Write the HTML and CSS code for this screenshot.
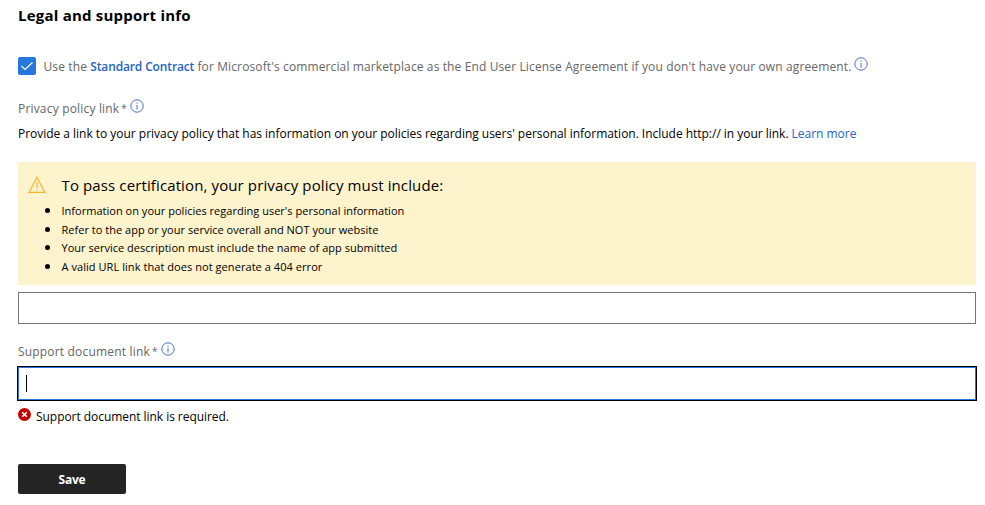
FILE: index.html
```html
<!DOCTYPE html>
<html lang="en">
<head>
<meta charset="utf-8">
<title>Legal and support info</title>
<link rel="stylesheet" href="styles.css">
</head>
<body>
<svg class="defs" width="0" height="0">
  <symbol id="info" viewBox="0 0 14 14"><circle cx="7" cy="7" r="6.2" fill="none" stroke="currentColor"/><path d="M7 6v4.5M7 3.5v1.2" stroke="currentColor" fill="none"/></symbol>
</svg>
<form class="page">
  <h1><span>Legal and support info</span></h1>
  <div class="agreement">
    <span class="checkbox" role="checkbox" aria-checked="true"><svg width="18" height="18" viewBox="0 0 18 18"><path d="M3.5 9l3.5 3.5 7.5-7" fill="none" stroke="#fff" stroke-width="1.2"/></svg></span>
    <span class="agreement-text">Use the <a class="strong">Standard Contract</a> for Microsoft's commercial marketplace as the End User License Agreement if you don't have your own agreement.</span>
    <svg class="info"><use href="#info"/></svg>
  </div>
  <div class="label privacy-label"><span class="label-text">Privacy policy link</span><span class="star">*</span><svg class="info"><use href="#info"/></svg></div>
  <p class="help"><span>Provide a link to your privacy policy that has information on your policies regarding users' personal information. Include http:// in your link. <a>Learn more</a></span></p>
  <section class="notice">
    <svg class="warning" width="18" height="18" viewBox="0 0 18 18"><path d="M9 1.2L16.9 16.4H1.1Z M9 6v6M9 13.2v1.4" fill="none" stroke="#f7b32b" stroke-width="1.1"/></svg>
    <div>
      <h2><span>To pass certification, your privacy policy must include:</span></h2>
      <ul>
        <li><span>Information on your policies regarding user's personal information</span></li>
        <li><span>Refer to the app or your service overall and NOT your website</span></li>
        <li><span>Your service description must include the name of app submitted</span></li>
        <li class="last"><span>A valid URL link that does not generate a 404 error</span></li>
      </ul>
    </div>
  </section>
  <div class="field"></div>
  <div class="label support-label"><span class="label-text">Support document link</span><span class="star">*</span><svg class="info"><use href="#info"/></svg></div>
  <div class="field focused"><span class="caret"></span></div>
  <div class="error"><svg width="13" height="13" viewBox="0 0 13 13"><circle cx="6.5" cy="6.5" r="6.5" fill="#c50000"/><path d="M4.2 4.2l4.6 4.6M8.8 4.2L4.2 8.8" stroke="#fff" stroke-width="1.6"/></svg><span>Support document link is required.</span></div>
  <button type="button"><span>Save</span></button>
</form>
</body>
</html>
```

FILE: styles.css
```css
* { box-sizing: border-box; }
body { margin: 0; background: #fff; color: #000; font: 12px/18px "Open Sans", "Noto Sans", sans-serif; }
.defs { display: block; height: 0; }
.page { width: 958px; margin-left: 18px; white-space: nowrap; }
h1, h2, p, ul { margin: 0; padding: 0; }
h1 { padding-top: 5px; height: 56px; font-size: 15px; line-height: 20px; font-weight: 700; letter-spacing: .22px; }
a { color: #2464c4; }
.agreement { display: flex; height: 20px; color: #666; font-weight: 500; }
.checkbox { width: 18px; height: 18px; margin: 1px 7.5px 0 0; background: #2877dc; border-radius: 2px; }
.checkbox svg { display: block; }
.agreement-text { line-height: 22px; letter-spacing: .12px; }
.strong { font-weight: 600; letter-spacing: -.14px; }
.info { width: 14px; height: 14px; color: #4a6fc8; margin: 1px 0 0 3px; }
.label { display: flex; height: 20px; line-height: 22px; color: #666; font-weight: 500; letter-spacing: .18px; }
.privacy-label { margin-top: 22px; }
.star { margin-left: 2px; font-size: 10px; line-height: 20px; }
.help { margin-top: 5px; height: 20px; line-height: 22px; letter-spacing: -.025px; }
.notice { display: flex; height: 123px; margin-top: 19px; padding: 13px 0 0 10px; background: #fdf3cd; }
.warning { margin: 1px 15.5px 0 0; flex: none; }
h2 { height: 27px; font-size: 15px; line-height: 20px; font-weight: 400; letter-spacing: .12px; }
ul { list-style: none; font-size: 11px; line-height: 18.67px; letter-spacing: .02px; }
li { position: relative; }
li::before { content: ""; position: absolute; left: -17px; top: 6px; width: 5px; height: 5px; border-radius: 50%; background: #000; }
.last { letter-spacing: .06px; }
.field { height: 32px; margin-top: 7px; border: 1px solid #767676; background: #fff; }
.support-label { margin-top: 17px; }
.focused { height: 33px; margin-top: 6px; border-color: #2877dc; outline: 1px solid #000; padding: 7px 0 0 7px; }
.caret { display: block; width: 1px; height: 17px; background: #000; }
.error { display: flex; height: 20px; margin-top: 6px; line-height: 22px; letter-spacing: -.05px; }
.error svg { margin: 2px 5px 0 0; }
button { display: block; width: 108px; height: 30px; margin-top: 38px; padding: 0; border: 0; border-radius: 2px; background: #242424; color: #fff; font: 700 12px "Open Sans", sans-serif; letter-spacing: -.2px; }
```
